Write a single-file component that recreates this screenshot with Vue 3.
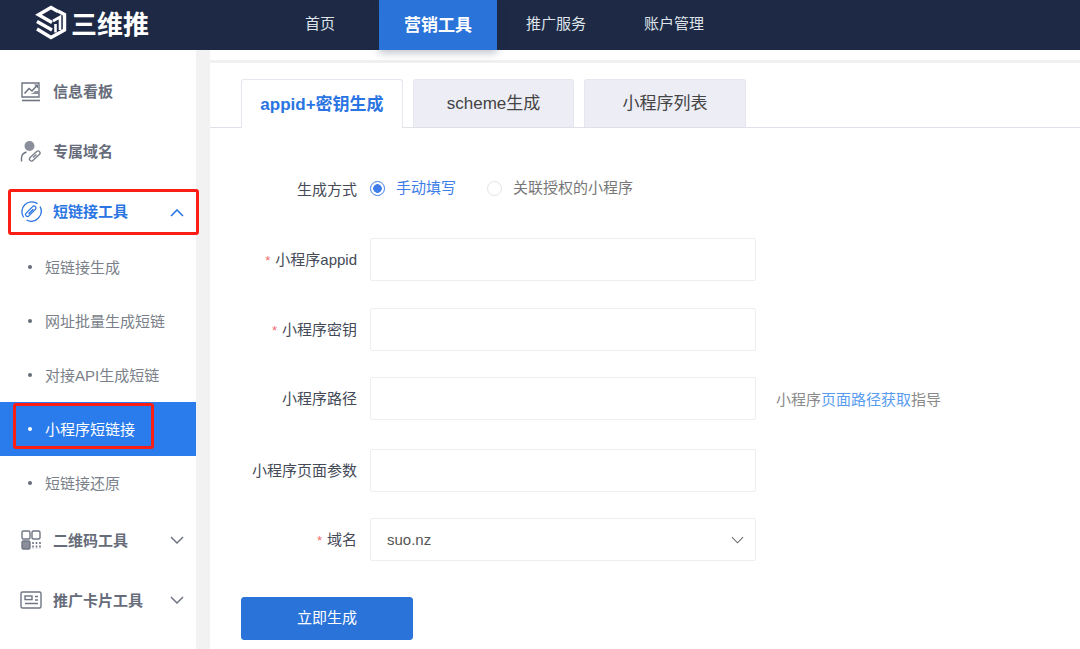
<template>
  <div class="page">
    <header class="topbar">
      <div class="logo">
        <svg class="logo_mark" viewBox="0 0 32 38" width="32" height="38" fill="none" stroke="#fff" stroke-width="3.4">
          <path d="M23 6.5 L16 2.5 L3.5 9.8 L17 17.5" />
          <path d="M2 16.5 L17 25" />
          <path d="M2 24 L16 32.5 L29.5 25 V9.5 L23 6" />
          <path d="M18 16 L25 12 V25" stroke-width="2.6" />
          <path d="M20.5 19 V27.5" stroke-width="2.6" />
        </svg>
        <span class="logo_text">三维推</span>
      </div>
      <nav class="nav">
        <a v-for="item in nav_items" :key="item.name" class="nav_item" :class="{ active: item.active }">{{ item.name }}</a>
      </nav>
    </header>

    <div class="main">
      <aside class="sidebar">
        <div class="menu_item">
          <svg class="menu_icon" viewBox="0 0 22 22" fill="none" stroke="#6f7582" stroke-width="1.4">
            <path d="M2 17 V3 H19 V17 Z" />
            <path d="M4.5 13.5 L9 8.5 L12 11 L16.5 6" stroke-width="1.6" />
            <path d="M14 4.5 H18 V8.5 Z" fill="#6f7582" stroke="none" />
            <path d="M10 14 H19 V11 H15 L13 13 Z" fill="#8a8f9b" stroke="none" />
            <path d="M2 20.5 H20" stroke-width="1.6" />
          </svg>
          <span>信息看板</span>
        </div>
        <div class="menu_item">
          <svg class="menu_icon" viewBox="0 0 22 22" fill="none" stroke="#6f7582" stroke-width="1.4">
            <circle cx="9.5" cy="6" r="5" fill="#8a8f9b" stroke="none" />
            <path d="M1.5 21.5 V18 C1.5 15 3.5 13 6.5 12" />
            <path d="M11.5 19 L18 13" stroke="#7b808c" stroke-width="5.4" stroke-linecap="round" />
            <path d="M11.5 19 L18 13" stroke="#fff" stroke-width="2.6" stroke-linecap="round" />
            <path d="M13 17.5 L16.5 14.5" stroke="#7b808c" stroke-width="1.5" />
          </svg>
          <span>专属域名</span>
        </div>
        <div class="menu_item open">
          <svg class="menu_icon" viewBox="0 0 22 22" fill="none" stroke="#2a75e2" stroke-width="1.3">
            <path d="M17.5 3.6 A10 10 0 0 0 3.6 17.5" />
            <path d="M6.5 20 A10 10 0 0 0 20 6.5" />
            <path d="M7.5 14.5 L14 8" stroke-width="5.2" stroke-linecap="round" />
            <path d="M7.5 14.5 L14 8" stroke="#fff" stroke-width="2.6" stroke-linecap="round" />
            <path d="M9 13.5 L13 9.5" stroke-width="1.4" stroke-linecap="round" />
          </svg>
          <span>短链接工具</span>
          <svg class="arrow" viewBox="0 0 14 8" fill="none" stroke="#2a75e2" stroke-width="1.6"><path d="M1 7 L7 1 L13 7" /></svg>
          <i class="red_box box_group"></i>
        </div>
        <div v-for="sub in sub_items" :key="sub.name" class="sub_item" :class="{ active: sub.active }">
          <i class="dot"></i>
          <span>{{ sub.name }}</span>
          <i v-if="sub.active" class="red_box box_sub"></i>
        </div>
        <div class="menu_item">
          <svg class="menu_icon" viewBox="0 0 22 22" fill="none" stroke="#6f7582" stroke-width="1.4">
            <rect x="2" y="2" width="8" height="8" rx="1.5" />
            <rect x="12" y="2" width="8" height="8" rx="1.5" />
            <rect x="2" y="12" width="8" height="8" rx="1.5" fill="#8a8f9b" />
            <path d="M13 13 V20 M16.5 13 V20 M20 13 V20" stroke-dasharray="2 1.4" stroke-width="1.6" />
          </svg>
          <span>二维码工具</span>
          <svg class="arrow" viewBox="0 0 14 8" fill="none" stroke="#6f7582" stroke-width="1.5"><path d="M1 1 L7 7 L13 1" /></svg>
        </div>
        <div class="menu_item">
          <svg class="menu_icon" viewBox="0 0 22 22" fill="none" stroke="#6f7582" stroke-width="1.4">
            <rect x="1" y="3" width="20" height="16" rx="1.5" />
            <rect x="5" y="7" width="7" height="3.6" />
            <path d="M15 7.5 H18 M15 11 H18 M5 14.5 H18" />
          </svg>
          <span>推广卡片工具</span>
          <svg class="arrow" viewBox="0 0 14 8" fill="none" stroke="#6f7582" stroke-width="1.5"><path d="M1 1 L7 7 L13 1" /></svg>
        </div>
      </aside>

      <section class="content">
        <div class="content_top"></div>
        <div class="tabs">
          <div v-for="tab in tabs" :key="tab.name" class="tab" :class="{ active: tab.active }">{{ tab.name }}</div>
        </div>

        <form class="form" @submit.prevent>
          <div class="row radio_row">
            <label class="label">生成方式</label>
            <div class="radio checked"><i></i><span>手动填写</span></div>
            <div class="radio"><i></i><span>关联授权的小程序</span></div>
          </div>
          <div class="row">
            <label class="label"><em>*</em>小程序appid</label>
            <input type="text" class="input" />
          </div>
          <div class="row">
            <label class="label"><em>*</em>小程序密钥</label>
            <input type="text" class="input" />
          </div>
          <div class="row path_row">
            <label class="label">小程序路径</label>
            <input type="text" class="input" />
            <p class="hint">小程序<a>页面路径获取</a>指导</p>
          </div>
          <div class="row params_row">
            <label class="label">小程序页面参数</label>
            <input type="text" class="input" />
          </div>
          <div class="row domain_row">
            <label class="label"><em>*</em>域名</label>
            <div class="input select">
              <span>suo.nz</span>
              <svg viewBox="0 0 14 8" width="13" height="8" fill="none" stroke="#666" stroke-width="1.1"><path d="M1 1 L7 7 L13 1" /></svg>
            </div>
          </div>
          <button class="submit" type="button">立即生成</button>
        </form>
      </section>
    </div>
  </div>
</template>

<script setup>
const nav_items = [
  { name: '首页' },
  { name: '营销工具', active: true },
  { name: '推广服务' },
  { name: '账户管理' },
]

const sub_items = [
  { name: '短链接生成' },
  { name: '网址批量生成短链' },
  { name: '对接API生成短链' },
  { name: '小程序短链接', active: true },
  { name: '短链接还原' },
]

const tabs = [
  { name: 'appid+密钥生成', active: true },
  { name: 'scheme生成' },
  { name: '小程序列表' },
]
</script>

<style>
html, body {
  margin: 0;
  background: #fff;
  overflow: hidden;
}
</style>

<style scoped>
.page {
  width: 1080px;
  height: 649px;
  overflow: hidden;
  font-family: "Liberation Sans", "Noto Sans CJK SC", sans-serif;
}

.topbar {
  height: 50px;
  background: #1e2a45;
  display: flex;
  align-items: center;
  position: relative;
  z-index: 2;
}

.logo {
  width: 281px;
  padding: 0 0 2px 35px;
  box-sizing: border-box;
  display: flex;
  align-items: center;
  gap: 4px;
  flex: none;
}

.logo_mark {
  flex: none;
}

.logo_text {
  margin-bottom: 3px;
  color: #fff;
  font-size: 26px;
  font-weight: 700;
}

.nav {
  display: flex;
  height: 100%;
  align-items: stretch;
}

.nav_item {
  width: 118px;
  box-sizing: border-box;
  padding-bottom: 6px;
  color: #dfe3ea;
  font-size: 15px;
  display: flex;
  align-items: center;
  justify-content: center;
}

.nav_item:first-child {
  width: 78px;
  margin-right: 20px;
}

.nav_item.active {
  padding-bottom: 4px;
  background: #2a73d9;
  color: #fff;
  font-size: 17px;
  font-weight: 700;
  box-shadow: 0 3px 8px rgba(30, 42, 69, 0.28);
}

.main {
  display: flex;
  height: 599px;
}

.sidebar {
  width: 196px;
  flex: none;
  padding-top: 11px;
  box-sizing: border-box;
  position: relative;
}

.menu_item {
  height: 60px;
  display: flex;
  align-items: center;
  padding: 0 12px 0 20px;
  font-size: 15px;
  font-weight: 700;
  color: #666c7a;
  position: relative;
}

.menu_item span {
  margin-bottom: 2px;
}

.menu_item.open {
  height: 59px;
  color: #2a75e2;
}

.menu_item.open span {
  margin-bottom: 0;
}

.menu_item.open .arrow {
  margin-top: 4px;
}

.menu_icon {
  width: 22px;
  height: 22px;
  margin-right: 11px;
  flex: none;
}

.arrow {
  width: 14px;
  height: 8px;
  margin-left: auto;
}

.sub_item {
  height: 54px;
  display: flex;
  align-items: center;
  padding-left: 28px;
  font-size: 15px;
  color: #7a7f8a;
  position: relative;
}

.sub_item span {
  margin-bottom: 2px;
}

.sub_item.active {
  background: #2a7bec;
  color: #fff;
}

.dot {
  width: 4px;
  height: 4px;
  border-radius: 50%;
  background: #666c7a;
  margin-right: 13px;
}

.sub_item.active .dot {
  background: #fff;
}

.red_box {
  position: absolute;
  border: 3px solid #fa1e14;
  border-radius: 3px;
  box-sizing: border-box;
}

.box_group {
  left: 8px;
  top: 8px;
  width: 191px;
  height: 46px;
}

.box_sub {
  left: 13px;
  top: 1px;
  width: 141px;
  height: 46px;
}

.content {
  flex: 1;
  margin-left: 14px;
  background: #fff;
  box-shadow: -14px 0 0 #f2f2f2;
  min-width: 0;
}

.content_top {
  height: 3px;
  margin-top: 10px;
  background: #f0f0f0;
}

.tabs {
  display: flex;
  gap: 10px;
  margin-top: 16px;
  padding-left: 31px;
  height: 48px;
  border-bottom: 1px solid #dfe0e8;
}

.tab {
  width: 161px;
  height: 48px;
  box-sizing: border-box;
  padding-bottom: 4px;
  border: 1px solid #e6e6ee;
  border-bottom: 0;
  border-radius: 3px 3px 0 0;
  background: #ecedf5;
  color: #444;
  font-size: 17px;
  display: flex;
  align-items: center;
  justify-content: center;
}

.tab:last-child {
  width: 162px;
}

.tab.active {
  width: 162px;
  height: 49px;
  background: #fff;
  color: #2a75e2;
  font-weight: 700;
}

.form {
  padding-left: 31px;
}

.row {
  display: flex;
  align-items: center;
  margin-bottom: 27px;
}

.radio_row {
  height: 20px;
  margin-top: 50px;
  margin-bottom: 40px;
}

.path_row {
  margin-top: -1px;
}

.params_row {
  margin-top: 29px;
}

.domain_row {
  margin-top: -1px;
}

.label {
  width: 116px;
  flex: none;
  margin: 0 13px 2px 0;
  text-align: right;
  font-size: 15px;
  color: #444a57;
}

.label em {
  color: #f56c6c;
  font-style: normal;
  margin-right: 5px;
  font-size: 13px;
}

.radio_row .label {
  margin-bottom: 0;
}

.radio {
  display: flex;
  align-items: center;
  font-size: 15px;
  color: #777;
  margin-right: 31px;
}

.radio span {
  margin-bottom: 3px;
}

.radio i {
  width: 15px;
  height: 15px;
  box-sizing: border-box;
  border: 1px solid #e2e4ea;
  border-radius: 50%;
  margin-right: 11px;
  background: #fff;
}

.radio.checked {
  color: #3f7ee8;
}

.radio.checked i {
  border-color: #3f7ee8;
  background: radial-gradient(circle, #3f7ee8 0 4px, #fff 4.6px);
}

.input {
  width: 386px;
  height: 43px;
  box-sizing: border-box;
  border: 1px solid #eeeeee;
  border-radius: 2px;
  background: #fff;
  outline: 0;
  flex: none;
}

.select {
  display: flex;
  align-items: center;
  justify-content: space-between;
  padding: 0 11px 0 16px;
  font-size: 15px;
  color: #555;
}

.hint {
  margin: 0 0 0 20px;
  font-size: 15px;
  color: #8a8a8a;
}

.hint a {
  color: #5a9df0;
}

.submit {
  display: block;
  width: 172px;
  height: 43px;
  margin-top: 36px;
  padding: 0 0 4px;
  border: 1px solid #2a73d9;
  border-radius: 3px;
  background: #2a73d9;
  color: #fff;
  font-family: inherit;
  font-size: 15px;
}
</style>
